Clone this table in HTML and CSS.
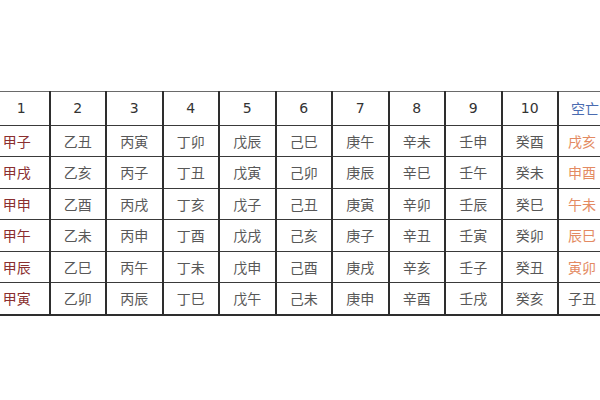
FILE: index.html
```html
<!DOCTYPE html>
<html lang="zh">
<head>
<meta charset="utf-8">
<link rel="stylesheet" href="styles.css">
</head>
<body>
<table class="jz">
  <colgroup>
    <col class="c"><col class="c"><col class="c"><col class="c"><col class="c"><col class="c"><col class="c"><col class="c"><col class="c"><col class="c"><col class="c">
  </colgroup>
  <thead>
    <tr class="head">
      <th>1</th><th>2</th><th>3</th><th>4</th><th>5</th><th>6</th><th>7</th><th>8</th><th>9</th><th>10</th><th class="kw">空亡</th>
    </tr>
  </thead>
  <tbody>
    <tr><td class="jia">甲子</td><td>乙丑</td><td>丙寅</td><td>丁卯</td><td>戊辰</td><td>己巳</td><td>庚午</td><td>辛未</td><td>壬申</td><td>癸酉</td><td class="kv">戌亥</td></tr>
    <tr><td class="jia">甲戌</td><td>乙亥</td><td>丙子</td><td>丁丑</td><td>戊寅</td><td>己卯</td><td>庚辰</td><td>辛巳</td><td>壬午</td><td>癸未</td><td class="kv">申酉</td></tr>
    <tr><td class="jia">甲申</td><td>乙酉</td><td>丙戌</td><td>丁亥</td><td>戊子</td><td>己丑</td><td>庚寅</td><td>辛卯</td><td>壬辰</td><td>癸巳</td><td class="kv">午未</td></tr>
    <tr><td class="jia">甲午</td><td>乙未</td><td>丙申</td><td>丁酉</td><td>戊戌</td><td>己亥</td><td>庚子</td><td>辛丑</td><td>壬寅</td><td>癸卯</td><td class="kv">辰巳</td></tr>
    <tr><td class="jia">甲辰</td><td>乙巳</td><td>丙午</td><td>丁未</td><td>戊申</td><td>己酉</td><td>庚戌</td><td>辛亥</td><td>壬子</td><td>癸丑</td><td class="kv">寅卯</td></tr>
    <tr><td class="jia">甲寅</td><td>乙卯</td><td>丙辰</td><td>丁巳</td><td>戊午</td><td>己未</td><td>庚申</td><td>辛酉</td><td>壬戌</td><td>癸亥</td><td class="kv last">子丑</td></tr>
  </tbody>
</table>
</body>
</html>
```
FILE: styles.css
```css
html, body {
  margin: 0;
  padding: 0;
  background: #ffffff;
  overflow: hidden;
}

body {
  width: 600px;
  height: 400px;
}

.jz {
  margin-top: 91px;
  margin-left: -8px;
  border-collapse: collapse;
  table-layout: fixed;
  width: 622px;
  font-family: "Noto Sans CJK SC", "Noto Sans", sans-serif;
}

.jz .c {
  width: 56.5px;
}

.jz th,
.jz td {
  border-left: 2px solid #2e2e2e;
  border-right: 2px solid #2e2e2e;
  border-top: 1.5px solid #3a3a3a;
  border-bottom: 1.5px solid #3a3a3a;
  text-align: center;
  padding: 0;
  white-space: nowrap;
  overflow: hidden;
}

.jz thead th {
  border-top: 1px solid #6a6a6a;
  height: 32.5px;
  font-family: "DejaVu Sans", "Noto Sans CJK SC", sans-serif;
  font-weight: normal;
  font-size: 14px;
  color: #333333;
}

.jz tbody td {
  height: 30.5px;
  font-size: 14px;
  color: #585858;
}

.jz tbody tr:last-child td {
  border-bottom: 2px solid #2e2e2e;
}

.jz .jia {
  color: #8a2f2f;
  padding-right: 9px;
}

.jz .kw,
.jz .kv {
  border-left: 1.5px solid #c9c2b8;
}

.jz thead .kw {
  color: #4a6bb0;
  font-family: "Noto Sans CJK SC", sans-serif;
  text-align: left;
  padding-left: 12px;
}

.jz .kv {
  color: #e38a62;
  text-align: left;
  padding-left: 9px;
}

.jz .kv.last {
  color: #585858;
}
```
